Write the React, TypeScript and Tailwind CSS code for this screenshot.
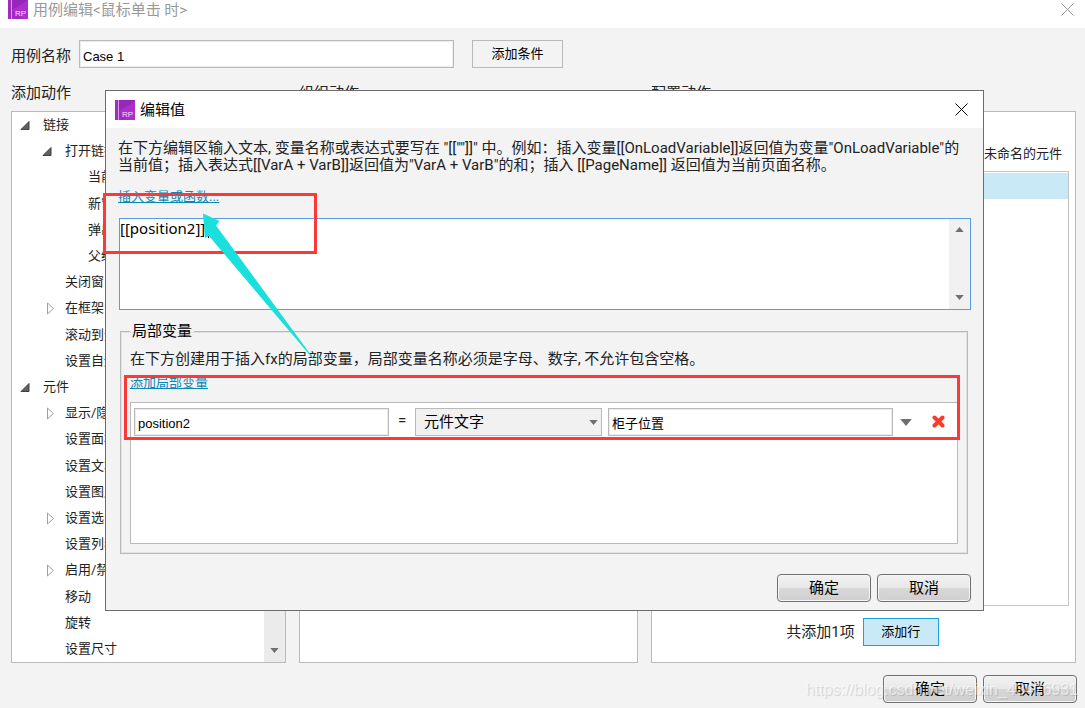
import { useState } from "react";
import type { ReactNode } from "react";
import clsx from "clsx";

type TreeItem = { label: string; level: number; state?: "open" | "closed" };

const ACTIONS: TreeItem[] = [
  { label: "链接", level: 0, state: "open" },
  { label: "打开链接", level: 1, state: "open" },
  { label: "当前窗口", level: 2 },
  { label: "新窗口/新标签", level: 2 },
  { label: "弹出窗口", level: 2 },
  { label: "父级窗口", level: 2 },
  { label: "关闭窗口", level: 1 },
  { label: "在框架中打开链接", level: 1, state: "closed" },
  { label: "滚动到元件<锚链接>", level: 1 },
  { label: "设置自适应视图", level: 1 },
  { label: "元件", level: 0, state: "open" },
  { label: "显示/隐藏", level: 1, state: "closed" },
  { label: "设置面板状态", level: 1 },
  { label: "设置文本", level: 1 },
  { label: "设置图片", level: 1 },
  { label: "设置选中", level: 1, state: "closed" },
  { label: "设置列表选中项", level: 1 },
  { label: "启用/禁用", level: 1, state: "closed" },
  { label: "移动", level: 1 },
  { label: "旋转", level: 1 },
  { label: "设置尺寸", level: 1 },
];

const INDENT = ["pl-2", "pl-[30px]", "pl-[53px]"];

const FIELD =
  "border border-[#b9b9b9] bg-white px-[3px] font-['Liberation_Sans','Noto_Sans_CJK_SC',sans-serif] text-[13px] text-black shadow-[inset_0_0_0_1px_#ececec] outline-none";

function Logo() {
  return (
    <svg width="20" height="20" viewBox="0 0 20 20" aria-hidden="true" className="shrink-0">
      <rect width="20" height="20" fill="#a32bc4" />
      <path d="M4 0H20V2L4 11Z" fill="#9627b8" />
      <path d="M20 1V20H14L4 11Z" fill="#ab30cb" />
      <rect x="3" width="1" height="20" fill="#d79be6" />
      <text x="7" y="17" fontSize="8" fontFamily="Liberation Sans, sans-serif" fill="#f3dcf8">
        RP
      </text>
    </svg>
  );
}

function CloseIcon() {
  return (
    <svg width="13" height="13" viewBox="0 0 13 13" aria-hidden="true">
      <path d="M0.5 0.5L12.5 12.5M12.5 0.5L0.5 12.5" stroke="currentColor" fill="none" />
    </svg>
  );
}

function Caret({ up = false, wide = false }: { up?: boolean; wide?: boolean }) {
  return (
    <svg
      width={wide ? 12 : 9}
      height={wide ? 7 : 5}
      viewBox="0 0 10 6"
      aria-hidden="true"
      className={clsx("pointer-events-none shrink-0", up && "rotate-180")}
    >
      <path d="M0 0H10L5 6Z" fill="#6f6f6f" />
    </svg>
  );
}

function Arrow({ state }: { state?: "open" | "closed" }) {
  return (
    <svg width="14" height="14" viewBox="0 0 14 14" aria-hidden="true" className="shrink-0">
      {state === "open" && <path d="M9 3.5V11.5H1Z" fill="#606060" stroke="#404040" />}
      {state === "closed" && <path d="M5.5 2V13L11.5 7.5Z" fill="#fff" stroke="#a0a0a0" />}
    </svg>
  );
}

function PushButton({ children }: { children: ReactNode }) {
  return (
    <button
      type="button"
      className="h-7 w-[94px] rounded border border-[#707070] bg-[linear-gradient(#f2f2f2,#e8e8e8_50%,#d8d8d8_50%,#cfcfcf)] text-[15px] leading-5 text-black shadow-[inset_0_0_0_1px_#f5f5f5]"
    >
      {children}
    </button>
  );
}

function ActionTree() {
  return (
    <div className="flex min-h-0 border border-[#b9b9b9] bg-white">
      <ul className="grid min-w-0 flex-1 auto-rows-fr overflow-hidden">
        {ACTIONS.map((item) => (
          <li
            key={item.label}
            className={clsx(
              "flex items-center gap-[9px] whitespace-nowrap text-[13px] leading-5",
              INDENT[item.level],
            )}
          >
            <Arrow state={item.state} />
            {item.label}
          </li>
        ))}
      </ul>
      <div className="flex w-[21px] items-end justify-center bg-[#ebebeb] pb-[9px]">
        <Caret />
      </div>
    </div>
  );
}

function TargetPanel() {
  return (
    <div className="flex flex-col border border-[#b9b9b9] bg-white pb-4 pl-3 pr-1.5">
      <div className="flex h-[59px] items-end justify-end pb-[7px] pr-[7px] text-[13px] leading-5">
        <label className="flex items-center gap-1">
          <input type="checkbox" />
          隐藏未命名的元件
        </label>
      </div>
      <div className="flex-1 border border-[#c4c4c4]">
        <div className="mt-px h-[26px] bg-[#c9e9f7]" />
      </div>
      <div className="mt-3 flex items-center justify-center gap-2 pr-2">
        <span className="text-[15px] leading-5">共添加1项</span>
        <button
          type="button"
          className="h-7 w-[76px] border border-[#1c9fdc] bg-[#c9e9f7] text-[13px] leading-5 text-black"
        >
          添加行
        </button>
      </div>
    </div>
  );
}

function LocalVariables() {
  return (
    <fieldset className="ml-0.5 mr-[3px] mt-[11px] border border-[#b9b9b9] px-[9px] pb-[9px] shadow-[inset_0_0_0_1px_#e2e2e2]">
      <legend className="px-[2px] text-[15px] leading-5 text-black">局部变量</legend>
      <p className="mt-2 text-[15px] leading-5">
        在下方创建用于插入fx的局部变量，局部变量名称必须是字母、数字, 不允许包含空格。
      </p>
      <a href="#add" className="mt-1 block w-fit text-[13px] leading-5 text-[#0b87b5] underline">
        添加局部变量
      </a>
      <div className="mt-[9px] h-[142px] border border-[#b9b9b9] bg-white pl-[3px] pt-[5px]">
        <div className="grid h-7 grid-cols-[minmax(0,255fr)_14px_minmax(0,187fr)_minmax(0,285fr)_14px_38px] items-stretch gap-1.5">
          <input aria-label="变量名称" defaultValue="position2" className={clsx(FIELD, "pt-1")} />
          <span className="text-center text-[15px] leading-6">=</span>
          <div className="relative">
            <select
              aria-label="类型"
              className="h-full w-full appearance-none border border-[#b9b9b9] bg-[#f1f1f1] pl-2 text-[15px] text-black outline-none"
            >
              <option>元件文字</option>
            </select>
            <div className="pointer-events-none absolute inset-y-0 right-1 flex items-center">
              <Caret />
            </div>
          </div>
          <input aria-label="目标元件" defaultValue="柜子位置" className={clsx(FIELD, "pt-1")} />
          <button type="button" aria-label="选择元件" className="flex items-center justify-center">
            <Caret wide />
          </button>
          <button type="button" aria-label="删除" className="flex items-center justify-center pb-0.5">
            <svg width="13" height="13" viewBox="0 0 13 13" aria-hidden="true">
              <path
                d="M2.500 2.500L10.500 10.500M10.500 2.500L2.500 10.500"
                stroke="#fb3b2a"
                strokeWidth="4"
                strokeLinecap="round"
              />
            </svg>
          </button>
        </div>
      </div>
    </fieldset>
  );
}

function ValueDialog() {
  const [value, setValue] = useState("[[position2]]");

  return (
    <section
      role="dialog"
      aria-label="编辑值"
      className="absolute left-[105px] right-[101px] top-[90px] border border-[#6b6b6b] bg-[#f3f3f3]"
    >
      <header className="flex h-[37px] items-center gap-[5px] bg-white pl-[9px] pr-[15px]">
        <Logo />
        <h2 className="flex-1 text-[15px] leading-5 text-black">编辑值</h2>
        <button type="button" aria-label="关闭" className="text-black">
          <CloseIcon />
        </button>
      </header>
      <div className="px-3 pb-2 pt-3">
        <p className="text-[15px] leading-[17px]">
          在下方编辑区输入文本, 变量名称或表达式要写在 "[[""]]" 中。例如：插入变量[[OnLoadVariable]]返回值为变量"OnLoadVariable"的
          <br />
          当前值；插入表达式[[VarA + VarB]]返回值为"VarA + VarB"的和；插入 [[PageName]] 返回值为当前页面名称。
        </p>
        <a href="#insert" className="mt-[13px] block w-fit text-[13px] leading-5 text-[#0b87b5] underline">
          插入变量或函数...
        </a>
        <div className="ml-px mt-[11px] flex h-[92px] border border-[#569de5] bg-white">
          <textarea
            aria-label="表达式"
            value={value}
            onChange={(e) => setValue(e.target.value)}
            className="min-w-0 flex-1 resize-none font-['Noto_Sans'] text-[15px] leading-[18px] text-black outline-none"
          />
          <div className="flex w-[21px] flex-col items-center justify-between bg-[#f1f1f1] pb-[9px] pt-2">
            <Caret up />
            <Caret />
          </div>
        </div>
        <LocalVariables />
        <div className="mt-5 flex justify-end gap-1.5">
          <PushButton>确定</PushButton>
          <PushButton>取消</PushButton>
        </div>
      </div>
    </section>
  );
}

function Annotations() {
  return (
    <div className="pointer-events-none">
      <div className="absolute left-[103px] top-[193px] h-[61px] w-[214px] border-[3px] border-[#fc3838]" />
      <div className="absolute left-[124px] right-[125px] top-[375px] h-[65px] border-[3px] border-[#fc3838]" />
      <svg width="120" height="160" viewBox="200 210 120 160" aria-hidden="true" className="absolute left-[200px] top-[210px]">
        <path d="M208.500 221V238" stroke="#000" />
        <path d="M203 213.500L219.500 221L216 225.500L319 366L209 236L205 238Z" fill="#19dfdd" />
      </svg>
    </div>
  );
}

export default function App() {
  return (
    <div className="relative flex min-h-screen flex-col overflow-hidden bg-[#f3f3f3] font-[Roboto,'Noto_Sans_CJK_SC',sans-serif] text-[#222]">
      <header className="flex h-7 items-start gap-[5px] bg-white pl-2 pr-[11px]">
        <div className="-mt-px">
          <Logo />
        </div>
        <h1 className="flex-1 text-[15px] leading-5 text-[#999]">用例编辑&lt;鼠标单击 时&gt;</h1>
        <button type="button" aria-label="关闭" className="mt-[3px] text-[#999]">
          <CloseIcon />
        </button>
      </header>

      <main className="flex flex-1 flex-col pb-[5px] pl-[11px] pr-[9px] pt-3">
        <div className="flex items-center">
          <label htmlFor="case-name" className="w-[68px] pt-1 text-[15px] leading-5">
            用例名称
          </label>
          <input id="case-name" defaultValue="Case 1" className={clsx(FIELD, "h-7 w-[375px] pt-1")} />
          <button
            type="button"
            className="ml-[18px] h-7 w-[91px] border border-[#b9b9b9] text-[13px] leading-5 text-black"
          >
            添加条件
          </button>
        </div>

        <div className="mt-[15px] grid flex-1 grid-cols-[275px_339px_minmax(0,1fr)] grid-rows-[20px_1fr] gap-x-[13px] gap-y-2 text-[15px] leading-5">
          <h2>添加动作</h2>
          <h2>组织动作</h2>
          <h2>配置动作</h2>
          <ActionTree />
          <div className="border border-[#b9b9b9] bg-white" />
          <TargetPanel />
        </div>

        <div className="-mr-px mt-3 flex justify-end gap-1.5">
          <PushButton>确定</PushButton>
          <PushButton>取消</PushButton>
        </div>
      </main>

      <ValueDialog />
      <Annotations />
      <p className="pointer-events-none absolute bottom-2 right-[7px] font-['Liberation_Sans'] text-[16px] leading-5 text-white/60 [text-shadow:1px_1px_1px_rgb(0_0_0/0.15)]">
        https://blog.csdn.net/weixin_43476931
      </p>
    </div>
  );
}
